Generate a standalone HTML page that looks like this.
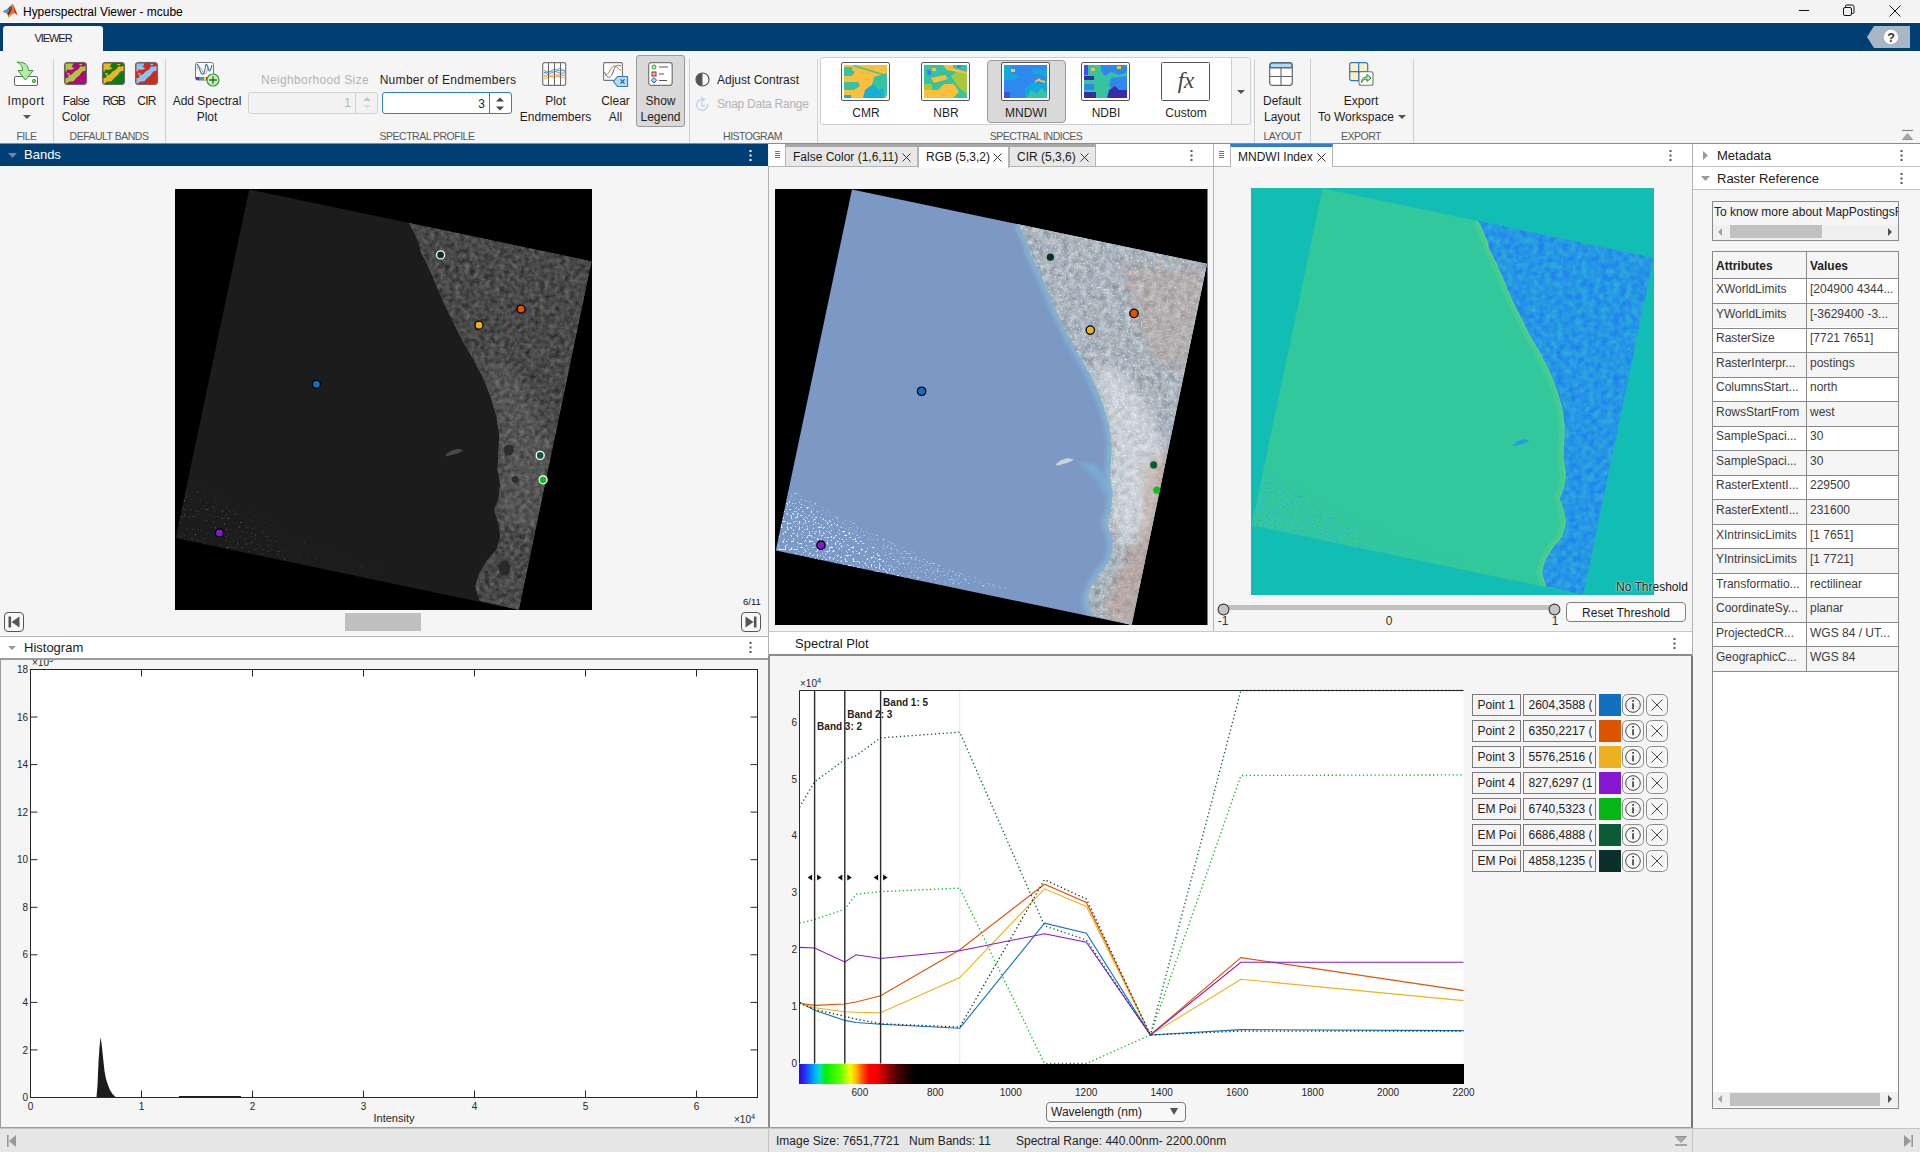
<!DOCTYPE html><html><head><meta charset="utf-8"><title>Hyperspectral Viewer - mcube</title><style>

*{box-sizing:border-box;margin:0;padding:0}
html,body{width:1920px;height:1152px;overflow:hidden;background:#f5f5f5}
body{font-family:"Liberation Sans",sans-serif;font-size:12px;color:#1a1a1a}
#app{position:relative;width:1920px;height:1152px;overflow:hidden;background:#f5f5f5}
.a{position:absolute}
.t{position:absolute;white-space:nowrap;line-height:1}
.c{text-align:center}
.ui{font-size:12px;color:#1f1f1f;letter-spacing:0}
.sec{font-size:10.5px;color:#5a5a5a;letter-spacing:-0.5px}
.dis{color:#b4b4b4}
.sep{position:absolute;width:1px;background:#d0d0d0;top:59px;height:84px}
.ph{font-size:13px;color:#1a1a1a}
.pt{font-size:12px;color:#1a1a1a}
svg{position:absolute;overflow:visible}

</style></head><body><div id="app">

<div class="a" style="left:0;top:0;width:1920px;height:23px;background:#f3f3f3;border-bottom:1px solid #fdfdfd"></div>
<svg style="left:0;top:0" width="20" height="22" viewBox="0 0 20 22">
 <path d="M2.3 11.6 L7.6 8.8 L11 5.6 L9.4 9.8 L7.2 13.8 Z" fill="#4a94dc"/>
 <path d="M7.6 8.8 L11 5.6 L12 4.2 L11.2 7.5 L9.4 9.8 Z" fill="#4e5f6e"/>
 <path d="M7.2 13.8 L9.4 9.8 L11.2 7.5 L12.4 3.8 L12.3 9.5 L10 14 L8.2 16.2 Z" fill="#8e2418"/>
 <path d="M8.2 16.2 L10 14 L12.3 9.5 L12.4 3.8 C13.6 4.6 14.6 9.2 17.8 15.6 C16.2 14.2 15.2 13.2 13.8 13.2 C12.2 13.6 10.6 16 8.8 18.1 Z" fill="#e8742c"/>
 <path d="M12.4 3.8 C13.6 4.6 15 9.6 17.8 15.6 C16.2 13.6 15.3 12.6 14.3 12.6 C14.3 9 13.6 6 12.4 3.8Z" fill="#c8261c"/>
 <path d="M8.2 16.2 L8.8 18.1 L10.4 16.3 L9.4 15 Z" fill="#f6b830"/>
</svg>
<div class="t" style="left:23px;top:6px;font-size:12px;color:#000;letter-spacing:-0.03px" id="title">Hyperspectral Viewer - mcube</div>
<svg style="left:1795px;top:0" width="120" height="23" viewBox="0 0 120 23" fill="none" stroke="#111" stroke-width="1">
 <path d="M4 10.5h10"/>
 <rect x="48.5" y="7.5" width="8" height="8" rx="1.5"/><path d="M50.5 7.5v-1.2a1.3 1.3 0 0 1 1.3 -1.3h5.4a1.8 1.8 0 0 1 1.8 1.8v5.4a1.3 1.3 0 0 1 -1.3 1.3h-1.2"/>
 <path d="M94.5 5.5l11 11M105.5 5.5l-11 11"/>
</svg>
<div class="a" style="left:0;top:23px;width:1920px;height:28px;background:#003e73"></div>
<div class="a" style="left:3px;top:26px;width:100px;height:25px;background:#f5f5f5;border-radius:3px 3px 0 0"></div>
<div class="t c" style="left:3px;width:100px;top:33px;font-size:11px;color:#222;letter-spacing:-1.05px">VIEWER</div>
<svg style="left:1867px;top:26px" width="43" height="22" viewBox="0 0 43 22">
 <path d="M0 11 L7 0 H43 V22 H7 Z" fill="#a9b6c4"/>
 <circle cx="24" cy="11" r="7.2" fill="#fff"/>
 <text x="24" y="15.5" font-size="12.5" font-weight="bold" text-anchor="middle" fill="#333" font-family="Liberation Sans, sans-serif">?</text>
</svg>

<div class="a" style="left:0;top:51px;width:1920px;height:92px;background:#f5f5f5"></div>
<div class="a" style="left:0;top:143px;width:1920px;height:1px;background:#8c8c8c"></div>
<div class="sep" style="left:53px"></div>
<div class="sep" style="left:165px"></div>
<div class="sep" style="left:689px"></div>
<div class="sep" style="left:817px"></div>
<div class="sep" style="left:1254px"></div>
<div class="sep" style="left:1310px"></div>
<div class="sep" style="left:1413px"></div>
<svg style="left:13px;top:61px" width="26" height="26" viewBox="0 0 26 26">
 <rect x="1.5" y="15.5" width="23" height="9" rx="1.5" fill="#fff" stroke="#666"/>
 <circle cx="21" cy="20" r="1.6" fill="#8fd68f" stroke="#2f9e2f"/>
 <path d="M4 1.2 C11.5 0.8 15.5 4 15.5 9.5 H20 L12.5 19 L5 9.5 H9.5 C9.5 5.5 8 3 4 1.2Z" fill="#b8e8b0" stroke="#2f9e2f" stroke-linejoin="round"/>
</svg>
<div class="t c ui" style="left:-44.0px;width:140px;top:95px;letter-spacing:0.5px;">Import</div>
<svg style="left:23px;top:115px" width="8" height="4"><path d="M0 0h8l-4 4z" fill="#555"/></svg>
<div class="t c sec" style="left:-43.5px;width:140px;top:131px;">FILE</div>
<svg style="left:64px;top:62px" width="23" height="23" viewBox="0 0 24 24">
 <rect x="0.5" y="0.5" width="23" height="23" rx="3" fill="#b4067c" stroke="#777"/>
 <path d="M1.5 1.5 H10 L8 5 L11 6.5 L8 8 H3 V10 L1.5 10Z M22.5 4 L22.5 9 L19 10 L16 14 L13 16.5 L10 20 L5 20.5 L3 22.5 H1.5 V17 L5 16 L4 14 L8 13 L11 10 L15 7.5 L17 4.5 L20 5Z" fill="#a9c93e"/>
 <rect x="3" y="11.5" width="3" height="1.5" fill="#a9c93e"/><rect x="16" y="2" width="3" height="1.3" fill="#a9c93e"/>
 <rect x="0.5" y="0.5" width="23" height="23" rx="3" fill="none" stroke="#6a6a6a"/>
</svg>
<svg style="left:102px;top:62px" width="23" height="23" viewBox="0 0 24 24">
 <rect x="0.5" y="0.5" width="23" height="23" rx="3" fill="#0f7a12" stroke="#777"/>
 <path d="M1.5 1.5 H10 L8 5 L11 6.5 L8 8 H3 V10 L1.5 10Z M22.5 4 L22.5 9 L19 10 L16 14 L13 16.5 L10 20 L5 20.5 L3 22.5 H1.5 V17 L5 16 L4 14 L8 13 L11 10 L15 7.5 L17 4.5 L20 5Z" fill="#f0b21e"/>
 <rect x="3" y="11.5" width="3" height="1.5" fill="#f0b21e"/><rect x="16" y="2" width="3" height="1.3" fill="#f0b21e"/>
 <rect x="0.5" y="0.5" width="23" height="23" rx="3" fill="none" stroke="#6a6a6a"/>
</svg>
<svg style="left:135px;top:62px" width="23" height="23" viewBox="0 0 24 24">
 <rect x="0.5" y="0.5" width="23" height="23" rx="3" fill="#d3281c" stroke="#777"/>
 <path d="M1.5 1.5 H10 L8 5 L11 6.5 L8 8 H3 V10 L1.5 10Z M22.5 4 L22.5 9 L19 10 L16 14 L13 16.5 L10 20 L5 20.5 L3 22.5 H1.5 V17 L5 16 L4 14 L8 13 L11 10 L15 7.5 L17 4.5 L20 5Z" fill="#82c8f2"/>
 <rect x="3" y="11.5" width="3" height="1.5" fill="#82c8f2"/><rect x="16" y="2" width="3" height="1.3" fill="#82c8f2"/>
 <rect x="0.5" y="0.5" width="23" height="23" rx="3" fill="none" stroke="#6a6a6a"/>
</svg>
<div class="t c ui" style="left:6.0px;width:140px;top:95px;letter-spacing:-0.6px;">False</div>
<div class="t c ui" style="left:6.0px;width:140px;top:111px;">Color</div>
<div class="t c ui" style="left:43.5px;width:140px;top:95px;letter-spacing:-1.3px;">RGB</div>
<div class="t c ui" style="left:76.5px;width:140px;top:95px;letter-spacing:-0.7px;">CIR</div>
<div class="t c sec" style="left:39.0px;width:140px;top:131px;">DEFAULT BANDS</div>
<svg style="left:195px;top:62px" width="25" height="25" viewBox="0 0 25 25">
 <rect x="0.5" y="0.5" width="18" height="17.5" rx="2" fill="#fff" stroke="#777"/>
 <path d="M1.5 7 C4 2 6 6 8 10 S12 12 13 4" fill="none" stroke="#e07020" stroke-width="0.8"/>
 <path d="M1.5 3 C4 0 5 14 8 12 S10 -1 12 3 S14 14 17 3" fill="none" stroke="#2a78c8" stroke-width="1.1"/>
 <rect x="1" y="15" width="3" height="3" fill="#6a2ad0"/><rect x="4" y="15" width="3" height="3" fill="#2a9df0"/><rect x="6.5" y="15" width="2.5" height="3" fill="#30c030"/><rect x="9" y="15" width="2.5" height="3" fill="#f0e020"/><rect x="11" y="15" width="3" height="3" fill="#e02020"/>
 <circle cx="18" cy="18" r="6" fill="#c8f0c0" stroke="#2f9e2f" stroke-width="1.2"/>
 <path d="M18 14.2v7.6M14.2 18h7.6" stroke="#1f6e1f" stroke-width="1.3"/>
</svg>
<div class="t c ui" style="left:137.0px;width:140px;top:95px;">Add Spectral</div>
<div class="t c ui" style="left:137.0px;width:140px;top:111px;">Plot</div>
<div class="t c ui dis" style="left:245.0px;width:140px;top:74px;letter-spacing:0.35px;">Neighborhood Size</div>
<div class="a" style="left:248px;top:92px;width:130px;height:22px;border:1px solid #d2d2d2;border-radius:3px;background:#f2f2f2"></div>
<div class="a" style="left:355px;top:93px;width:1px;height:20px;background:#d2d2d2"></div>
<div class="t ui dis" style="left:343px;top:97px;width:8px;text-align:right">1</div>
<svg style="left:363px;top:97px" width="8" height="12"><path d="M0 4l4-4l4 4z" fill="#c8c8c8"/><path d="M0 8h8l-4 3z" fill="#dcdcdc"/></svg>
<div class="t c ui" style="left:378.0px;width:140px;top:74px;letter-spacing:0.3px;">Number of Endmembers</div>
<div class="a" style="left:381.5px;top:92px;width:130.5px;height:22px;border:1.5px solid #2d7fd3;border-radius:3px;background:#fff"></div>
<div class="a" style="left:488.5px;top:93px;width:1px;height:20px;background:#2d7fd3"></div>
<div class="t ui" style="left:476px;top:98px;width:9px;text-align:right">3</div>
<svg style="left:496px;top:97px" width="8" height="14"><path d="M0 4.5l4-4l4 4z" fill="#444"/><path d="M0 9.5h8l-4 4z" fill="#444"/></svg>
<div class="t c sec" style="left:357.0px;width:140px;top:131px;">SPECTRAL PROFILE</div>
<svg style="left:542px;top:62px" width="25" height="24" viewBox="0 0 25 24">
 <rect x="0.7" y="0.7" width="23" height="22.6" rx="2" fill="#fff" stroke="#777" stroke-width="1.2"/>
 <path d="M2 8 L6 11 L12 7 L18 9 L23 8 M2 10 L6 13 L12 9 L18 11 L23 11 M2 11 L7 9 L12 11 L18 6 L23 10" fill="none" stroke="#4a90d8" stroke-width="0.9"/>
 <path d="M2 15 L6 13 L12 16 L18 12 L23 14 M2 17 L7 15 L12 14 L18 15 L23 16 M2 13 L6 16 L12 12 L18 14 L23 13" fill="none" stroke="#f0a030" stroke-width="0.9"/>
 <path d="M6.5 1v22M12.5 1v22M18.5 1v22" stroke="#666" stroke-width="1"/>
</svg>
<div class="t c ui" style="left:485.5px;width:140px;top:95px;">Plot</div>
<div class="t c ui" style="left:485.5px;width:140px;top:111px;">Endmembers</div>
<svg style="left:603px;top:62px" width="26" height="26" viewBox="0 0 26 26">
 <rect x="0.6" y="0.6" width="18.8" height="17.8" rx="1" fill="#fff" stroke="#777" stroke-width="1.1"/>
 <path d="M1.5 13 C6 14 7 5 11 4 S15 9 18 8" fill="none" stroke="#e07020" stroke-width="1"/>
 <path d="M1.5 10 C5 18 8 16 10 10 S14 2 18 4" fill="none" stroke="#2a78c8" stroke-width="1"/>
 <path d="M10.5 19.5 L14.5 14.5 H24.5 V24.5 H14.5 Z" fill="#b8dcf4" stroke="#2a78c8" stroke-width="1.1" stroke-linejoin="round"/>
 <path d="M17.5 17.3l4 4.4M21.5 17.3l-4 4.4" stroke="#1a5aa8" stroke-width="1.1"/>
</svg>
<div class="t c ui" style="left:545.5px;width:140px;top:95px;">Clear</div>
<div class="t c ui" style="left:545.5px;width:140px;top:111px;">All</div>
<div class="a" style="left:636px;top:55px;width:49px;height:72px;background:#d9d9d9;border:1px solid #9a9a9a;border-radius:3px"></div>
<svg style="left:648px;top:62px" width="25" height="24" viewBox="0 0 25 24">
 <rect x="0.7" y="0.7" width="23.5" height="22.6" rx="2.5" fill="#fff" stroke="#777" stroke-width="1.2"/>
 <circle cx="6" cy="5" r="2" fill="#c0f0c0" stroke="#2f9e2f" stroke-width="1"/>
 <rect x="4" y="10" width="4" height="4" fill="#f4b890" stroke="#a03018" stroke-width="1"/>
 <path d="M6 15.6 l2.7 2.7 l-2.7 2.7 l-2.7 -2.7z" fill="#a0d0f8" stroke="#1a60b0" stroke-width="1"/>
 <path d="M11 5h9M11 12h5M11 18.5h8" stroke="#555" stroke-width="1"/>
</svg>
<div class="t c ui" style="left:590.5px;width:140px;top:95px;">Show</div>
<div class="t c ui" style="left:590.5px;width:140px;top:111px;">Legend</div>
<svg style="left:695px;top:72px" width="15" height="15" viewBox="0 0 15 15"><circle cx="7.5" cy="7.5" r="6.5" fill="#fff" stroke="#555" stroke-width="1.2"/><path d="M7.5 1 A6.5 6.5 0 0 0 7.5 14Z" fill="#555"/></svg>
<div class="t ui" style="left:717px;top:74px">Adjust Contrast</div>
<svg style="left:695px;top:96px" width="14" height="16" viewBox="0 0 14 16" fill="none" stroke="#b8d4ee" stroke-width="1.3"><path d="M8 3.5 A5.5 5.5 0 1 0 12.5 8"/><path d="M6 1 L9.5 3.5 L6 6"/><path d="M7 6.5v3.5h3"/></svg>
<div class="t ui dis" style="left:717px;top:98px;letter-spacing:-0.25px">Snap Data Range</div>
<div class="t c sec" style="left:682.5px;width:140px;top:131px;">HISTOGRAM</div>
<div class="a" style="left:820px;top:57px;width:431px;height:68px;background:#fff;border:1px solid #cfcfcf;border-radius:3px"></div>
<div class="a" style="left:1231px;top:58px;width:1px;height:66px;background:#cfcfcf"></div>
<div class="a" style="left:1232px;top:58px;width:18px;height:66px;background:#f5f5f5;border-radius:0 3px 3px 0"></div>
<svg style="left:1237px;top:90px" width="8" height="4"><path d="M0 0h8l-4 4z" fill="#555"/></svg>
<div class="a" style="left:986.5px;top:59.5px;width:79.5px;height:63.5px;background:#d9d9d9;border:1px solid #9a9a9a;border-radius:4px"></div>
<svg style="left:841px;top:62px" width="49" height="39" viewBox="0 0 49 39"><rect x="0.5" y="0.5" width="48" height="38" rx="1.5" fill="#fff" stroke="#555"/><rect x="3" y="3" width="43" height="33" fill="#fdbe3c"/><path d="M3 5 h8 v3 l3 2 l-3 4 h-8z M3 20 h14 l2 4 l-6 4 h-10z M33 15 l13 -4 v22 l-6 2 l-10 -8 l2 -8z M14 3.2 L46 13 v1.6 L12 4.2z" fill="#35c3a0"/><path d="M22 36 l2 -8 l8 -6 l6 6 l4 -2 l2 10z M3 33 h7 v3 h-7z" fill="#14b1d4"/></svg>
<div class="t c ui" style="left:796.0px;width:140px;top:107px;">CMR</div>
<svg style="left:921px;top:62px" width="49" height="39" viewBox="0 0 49 39"><rect x="0.5" y="0.5" width="48" height="38" rx="1.5" fill="#fff" stroke="#555"/><rect x="3" y="3" width="43" height="33" fill="#35c3a0"/><path d="M3 28 h14 l6 -6 h10 l5 8 l-6 6 h-29z M10 16 l14 -3 l3 4 l-14 4z M3 36 v-4 h8 v4z" fill="#fdbe3c"/><path d="M3 22 h8 v6 h-8z M30 14 l8 -6 l8 4 v20 l-8 -6 l-4 -6z" fill="#a8c83c"/><path d="M22 3 h10 v3 l14 4 v2 l-20 -4z M11 6 h4 v3 h-4z" fill="#fdbe3c"/><path d="M6 8 h4 v5 h-4z M36 3 h4 v3 h-4z" fill="#2f88f0"/></svg>
<div class="t c ui" style="left:876.0px;width:140px;top:107px;">NBR</div>
<svg style="left:1001px;top:62px" width="49" height="39" viewBox="0 0 49 39"><rect x="0.5" y="0.5" width="48" height="38" rx="1.5" fill="#fff" stroke="#555"/><rect x="3" y="3" width="43" height="33" fill="#2f88f0"/><path d="M3 3 h8 v8 l8 4 l-10 4 l-6 -2z M24 26 l8 -6 l8 2 l6 -6 v20 h-22z M30 6 l16 2 v6 l-14 -2z" fill="#14a8dc"/><path d="M26 36 l4 -8 l6 4 l4 -6 l6 6 v4z" fill="#35c3a0"/><path d="M10 7 h4 v3 h-4z M34 19 l4 -3 l2 2 l4 1 v2 l-4 -1 l-3 -1 l-3 2z" fill="#fdbe3c"/><path d="M3 30 h6 v6 h-6z" fill="#4050e0"/></svg>
<div class="t c ui" style="left:956.0px;width:140px;top:107px;">MNDWI</div>
<svg style="left:1081px;top:62px" width="49" height="39" viewBox="0 0 49 39"><rect x="0.5" y="0.5" width="48" height="38" rx="1.5" fill="#fff" stroke="#555"/><rect x="3" y="3" width="43" height="33" fill="#35c3a0"/><path d="M20 3 h26 v8 l-8 2 l-8 -3 l-6 4 l-4 -5z M30 16 l16 -2 v14 l-10 2 l-8 -6z M3 22 h10 v6 h-10z" fill="#2f88f0"/><path d="M26 36 l2 -8 l6 -4 l4 4 l8 0 v8z M3 14 h10 v4 h-10z M3 30 h12 v6 h-12z" fill="#3a2ca8"/><path d="M10 6 h4 v3 h-4z M36 4 h4 v3 h-4z" fill="#fdbe3c"/><path d="M3 3 h4 v10 h-4z" fill="#4050e0"/></svg>
<div class="t c ui" style="left:1036.0px;width:140px;top:107px;">NDBI</div>
<svg style="left:1161px;top:62px" width="49" height="39" viewBox="0 0 49 39">
 <rect x="0.5" y="0.5" width="48" height="38" rx="1" fill="#fff" stroke="#555"/>
 <text x="25" y="26" font-family="Liberation Serif, serif" font-style="italic" font-size="23" text-anchor="middle" fill="#444">fx</text></svg>
<div class="t c ui" style="left:1116.0px;width:140px;top:107px;">Custom</div>
<div class="t c sec" style="left:966.0px;width:140px;top:131px;">SPECTRAL INDICES</div>
<svg style="left:1269px;top:62px" width="25" height="25" viewBox="0 0 25 25">
 <rect x="0.7" y="0.7" width="22.6" height="22.6" rx="2.5" fill="#fff" stroke="#666" stroke-width="1.2"/>
 <path d="M1.3 5.5 V3 a1.8 1.8 0 0 1 1.8 -1.8 H21 a1.8 1.8 0 0 1 1.8 1.8 V5.5Z" fill="#b0d8f8" stroke="#2a78c8" stroke-width="1"/>
 <path d="M1 6h22M1 14.5h22M12 6v17" stroke="#666" stroke-width="1.1"/>
</svg>
<div class="t c ui" style="left:1212.0px;width:140px;top:95px;">Default</div>
<div class="t c ui" style="left:1212.0px;width:140px;top:111px;">Layout</div>
<div class="t c sec" style="left:1212.5px;width:140px;top:131px;">LAYOUT</div>
<svg style="left:1349px;top:62px" width="26" height="25" viewBox="0 0 26 25">
 <rect x="0.7" y="0.7" width="18" height="18" rx="2" fill="#fbf0c0" stroke="#2a78c8" stroke-width="1.2"/>
 <path d="M9.7 1v18M1 9.7h18" stroke="#2a78c8" stroke-width="1.2"/>
 <rect x="10" y="9.7" width="14" height="13.6" rx="2" fill="#fff" stroke="#777" stroke-width="1.1"/>
 <path d="M12.5 20.5 C12.5 16.5 15 15 18 15 V12.5 L22 16 L18 19.5 V17 C15.5 17 14 18 12.5 20.5Z" fill="#c0f0b8" stroke="#1f8e1f" stroke-width="1" stroke-linejoin="round"/>
</svg>
<div class="t c ui" style="left:1291.0px;width:140px;top:95px;">Export</div>
<div class="t ui" style="left:1318px;top:111px">To Workspace</div>
<svg style="left:1398px;top:115px" width="8" height="4"><path d="M0 0h8l-4 4z" fill="#555"/></svg>
<div class="t c sec" style="left:1291.0px;width:140px;top:131px;">EXPORT</div>
<svg style="left:1902px;top:130px" width="11" height="10"><path d="M0 0.5h11" stroke="#888" stroke-width="1.2"/><path d="M0.5 9.5L5.5 3.5L10.5 9.5Z" fill="#aaa" stroke="#888" stroke-width="0.8"/></svg>
<div class="a" style="left:0;top:144px;width:768px;height:22px;background:#003e73"></div>
<svg style="left:8px;top:153px" width="9" height="5"><path d="M0 0h9l-4.5 5z" fill="#6f88a6"/></svg>
<div class="t" style="left:24px;top:148px;font-size:13px;color:#fff">Bands</div>
<svg style="left:749px;top:150px" width="3" height="11"><rect x="0.5" y="0" width="2" height="2" fill="#fff"/><rect x="0.5" y="4.5" width="2" height="2" fill="#fff"/><rect x="0.5" y="9" width="2" height="2" fill="#fff"/></svg>
<div class="a" style="left:768px;top:166px;width:1px;height:963px;background:#b0b0b0"></div>
<svg style="left:175px;top:189px" width="417" height="421" viewBox="0 0 417 421">
<defs><clipPath id="qb"><polygon points="74.2,0.4 416.6,72.2 343.9,421.0 0.7,349.1"/></clipPath>
<clipPath id="lb"><polygon points="233.9,33.7 239.5,44.2 244.3,55.4 245.8,62.9 252.5,76.0 260.7,94.7 269.3,115.3 278.6,134.0 287.9,152.7 299.1,171.4 308.5,190.1 315.9,208.8 321.5,227.5 324.1,246.2 323.4,264.9 322.6,279.9 325.2,294.9 323.4,309.9 318.9,321.1 323.4,334.2 325.2,347.3 321.5,360.4 312.2,371.6 304.0,384.7 300.3,397.8 304.7,411.6 343.9,421.0 416.6,72.2"/></clipPath>
<filter id="fb" x="0" y="0" width="100%" height="100%" color-interpolation-filters="sRGB"><feTurbulence type="fractalNoise" baseFrequency="0.2" numOctaves="3" seed="4"/><feColorMatrix type="matrix" values="0.3 0.15 0 0 0.06  0.3 0.15 0 0 0.06  0.3 0.15 0 0 0.06  0 0 0 0 1"/><feComposite in2="SourceAlpha" operator="in"/></filter>
<filter id="gb" x="0" y="0" width="100%" height="100%" color-interpolation-filters="sRGB"><feTurbulence type="fractalNoise" baseFrequency="0.55" numOctaves="1" seed="9"/><feColorMatrix type="matrix" values="0 0 0 0 0.42  0 0 0 0 0.42  0 0 0 0 0.42  0 5 0 0 -3.3"/><feComposite in2="SourceAlpha" operator="in"/></filter>
<filter id="blb" x="-20%" y="-20%" width="140%" height="140%"><feGaussianBlur stdDeviation="5"/></filter>
<filter id="bl2b" x="-20%" y="-20%" width="140%" height="140%"><feGaussianBlur stdDeviation="2"/></filter>
</defs>
<rect width="417" height="421" fill="#000"/>
<g clip-path="url(#qb)">
<rect width="417" height="421" fill="#1c1c1c"/>
<polygon points="0.0,294.7 16.7,290.5 54.2,311.5 104.2,336.8 166.8,366.3 229.4,387.3 125.1,378.9 0.0,349.4" filter="url(#gb)" fill="#fff" opacity="0.55"/>
<polygon points="0.0,303.1 20.9,301.0 58.4,322.1 100.1,349.4 125.1,381.0 0.0,349.4" filter="url(#gb)" fill="#fff"/>
<g clip-path="url(#lb)"><rect width="417" height="421" fill="#4a4a4a"/>
<rect width="417" height="421" filter="url(#fb)"/>
<rect width="417" height="421" filter="url(#gb)" opacity="0.5"/>
<polygon points="308.6,168.4 333.6,176.8 358.6,210.5 375.3,252.6 371.1,303.1 358.6,336.8 333.6,345.2 323.2,303.1 325.3,252.6 316.9,210.5" fill="#fff" opacity="0.07" filter="url(#blb)"/>
<ellipse cx="333.6" cy="261.0" rx="5.0" ry="5.5" fill="#262626" opacity="0.85"/>
<ellipse cx="329.4" cy="378.9" rx="5.8" ry="7.6" fill="#262626" opacity="0.85"/>
<ellipse cx="339.9" cy="290.5" rx="3.3" ry="3.4" fill="#262626" opacity="0.85"/>
</g>
<polygon points="270.4,265.7 275.6,262.0 282.4,259.7 288.3,261.2 283.1,264.2 277.1,265.7 271.9,267.2" fill="#4a4a4a"/>
</g>
<circle cx="265.6" cy="65.9" r="4" fill="#0b2f2c" stroke="#fff" stroke-width="1.3"/>
<circle cx="346.1" cy="120.1" r="4" fill="#dd5400" stroke="#000" stroke-width="1.3"/>
<circle cx="304.0" cy="136.2" r="4" fill="#edb120" stroke="#000" stroke-width="1.3"/>
<circle cx="141.4" cy="195.3" r="4" fill="#1171be" stroke="#000" stroke-width="1.3"/>
<circle cx="365.2" cy="266.4" r="4" fill="#0b5c36" stroke="#fff" stroke-width="1.3"/>
<circle cx="368.1" cy="290.8" r="4" fill="#0fbf18" stroke="#fff" stroke-width="1.3"/>
<circle cx="44.4" cy="343.9" r="4" fill="#8516d1" stroke="#000" stroke-width="1.3"/>
</svg>
<div class="a" style="left:345px;top:613px;width:76px;height:18px;background:#c0c0c0"></div>
<div class="t" style="left:743px;top:597px;font-size:9.5px;color:#111">6/11</div>
<svg style="left:4px;top:612px" width="20" height="20" viewBox="0 0 20 20"><rect x="0.5" y="0.5" width="19" height="19" rx="3.5" fill="#f8f8f8" stroke="#555"/><g><rect x="4.5" y="4.5" width="2.6" height="11" fill="#555"/><path d="M15.5 4.5 V15.5 L7.5 10Z" fill="#555"/></g></svg>
<svg style="left:741px;top:612px" width="20" height="20" viewBox="0 0 20 20"><rect x="0.5" y="0.5" width="19" height="19" rx="3.5" fill="#f8f8f8" stroke="#555"/><g transform="translate(20,0) scale(-1,1)"><rect x="4.5" y="4.5" width="2.6" height="11" fill="#555"/><path d="M15.5 4.5 V15.5 L7.5 10Z" fill="#555"/></g></svg>
<div class="a" style="left:0;top:636px;width:768px;height:1px;background:#b8b8b8"></div>
<div class="a" style="left:769px;top:144px;width:444px;height:22px;background:#fff"></div>
<div class="a" style="left:769px;top:166px;width:444px;height:1px;background:#b4b4b4"></div>
<div class="a" style="left:785px;top:144px;width:311px;height:3px;background:#a8a8a8"></div>
<div class="a" style="left:785px;top:147px;width:133px;height:19px;background:#e8e8e8;border-left:1px solid #b4b4b4;border-right:1px solid #b4b4b4"></div>
<div class="t pt" style="left:793px;top:151px">False Color (1,6,11)</div>
<svg style="left:902px;top:153px" width="9" height="9"><path d="M0.5 0.5l8 8M8.5 0.5l-8 8" stroke="#333" stroke-width="1" fill="none"/></svg>
<div class="a" style="left:918px;top:147px;width:91px;height:21px;background:#fff;border-left:1px solid #b4b4b4;border-right:1px solid #b4b4b4"></div>
<div class="t pt" style="left:926px;top:151px">RGB (5,3,2)</div>
<svg style="left:993px;top:153px" width="9" height="9"><path d="M0.5 0.5l8 8M8.5 0.5l-8 8" stroke="#333" stroke-width="1" fill="none"/></svg>
<div class="a" style="left:1009px;top:147px;width:87px;height:19px;background:#e8e8e8;border-left:1px solid #b4b4b4;border-right:1px solid #b4b4b4"></div>
<div class="t pt" style="left:1017px;top:151px">CIR (5,3,6)</div>
<svg style="left:1080px;top:153px" width="9" height="9"><path d="M0.5 0.5l8 8M8.5 0.5l-8 8" stroke="#333" stroke-width="1" fill="none"/></svg>
<svg style="left:775px;top:151px" width="5" height="8"><path d="M0 0.5h5M0 2.5h5M0 4.5h5M0 6.5h5" stroke="#777" stroke-width="1"/></svg>
<svg style="left:1190px;top:150px" width="3" height="11"><rect x="0.5" y="0" width="2" height="2" fill="#555"/><rect x="0.5" y="4.5" width="2" height="2" fill="#555"/><rect x="0.5" y="9" width="2" height="2" fill="#555"/></svg>
<div class="a" style="left:1213px;top:144px;width:1px;height:488px;background:#b4b4b4"></div>
<svg style="left:775px;top:189px" width="432.5" height="436" viewBox="0 0 432.5 436">
<defs><clipPath id="qr"><polygon points="77.0,0.4 432.1,74.8 356.7,436.0 0.8,361.6"/></clipPath>
<clipPath id="lr"><polygon points="242.6,34.9 248.4,45.7 253.4,57.4 254.9,65.1 261.9,78.7 270.4,98.1 279.3,119.4 289.0,138.7 298.6,158.1 310.3,177.5 319.9,196.9 327.7,216.3 333.5,235.6 336.2,255.0 335.4,274.4 334.6,289.9 337.3,305.4 335.4,320.9 330.8,332.5 335.4,346.1 337.3,359.7 333.5,373.2 323.8,384.8 315.3,398.4 311.4,412.0 316.1,426.3 356.7,436.0 432.1,74.8"/></clipPath>
<filter id="fr" x="0" y="0" width="100%" height="100%" color-interpolation-filters="sRGB"><feTurbulence type="fractalNoise" baseFrequency="0.16" numOctaves="3" seed="4"/><feColorMatrix type="matrix" values="0.3 0.15 0.12 0 0.375  0.3 0.15 0 0 0.47  0.3 0.15 -0.1 0 0.555  0 0 0 0 1"/><feComposite in2="SourceAlpha" operator="in"/></filter>
<filter id="gr" x="0" y="0" width="100%" height="100%" color-interpolation-filters="sRGB"><feTurbulence type="fractalNoise" baseFrequency="0.5" numOctaves="1" seed="9"/><feColorMatrix type="matrix" values="0 0 0 0 1  0 0 0 0 1  0 0 0 0 1  0 5 0 0 -2.9"/><feComposite in2="SourceAlpha" operator="in"/></filter>
<filter id="blr" x="-20%" y="-20%" width="140%" height="140%"><feGaussianBlur stdDeviation="5"/></filter>
<filter id="bl2r" x="-20%" y="-20%" width="140%" height="140%"><feGaussianBlur stdDeviation="2"/></filter>
</defs>
<rect width="432.5" height="436" fill="#000"/>
<g clip-path="url(#qr)">
<rect width="432.5" height="436" fill="#7c98c4"/>
<polygon points="0.0,305.2 17.3,300.8 56.2,322.6 108.1,348.8 173.0,379.3 237.9,401.1 129.8,392.4 0.0,361.9" filter="url(#gr)" fill="#fff" opacity="0.55"/>
<polygon points="0.0,313.9 21.6,311.7 60.6,333.5 103.8,361.9 129.8,394.6 0.0,361.9" filter="url(#gr)" fill="#fff"/>
<polyline points="242.6,34.9 248.4,45.7 253.4,57.4 254.9,65.1 261.9,78.7 270.4,98.1 279.3,119.4 289.0,138.7 298.6,158.1 310.3,177.5 319.9,196.9 327.7,216.3 333.5,235.6 336.2,255.0 335.4,274.4 334.6,289.9 337.3,305.4 335.4,320.9 330.8,332.5 335.4,346.1 337.3,359.7 333.5,373.2 323.8,384.8 315.3,398.4 311.4,412.0 316.1,426.3" fill="none" stroke="#8fc0dc" stroke-width="9" opacity="0.6" filter="url(#bl2r)"/>
<g clip-path="url(#lr)"><rect width="432.5" height="436" fill="#aab5bc"/>
<rect width="432.5" height="436" filter="url(#fr)"/>
<rect width="432.5" height="436" filter="url(#gr)" opacity="0.55"/>
<polygon points="320.1,174.4 346.0,183.1 371.9,218.0 389.2,261.6 384.9,313.9 371.9,348.8 346.0,357.5 335.2,313.9 337.4,261.6 328.7,218.0" fill="#fff" opacity="0.38" filter="url(#blr)"/>
<polygon points="371.9,270.3 402.2,261.6 389.2,348.8 363.3,436.0 328.7,427.3 346.0,375.0 367.6,340.1" fill="#c09a88" opacity="0.45" filter="url(#blr)"/>
<polygon points="346.0,74.1 432.5,82.8 415.2,183.1 380.6,174.4 363.3,130.8" fill="#c4a292" opacity="0.3" filter="url(#blr)"/>
</g>
<polyline points="242.6,34.9 248.4,45.7 253.4,57.4 254.9,65.1 261.9,78.7 270.4,98.1 279.3,119.4 289.0,138.7 298.6,158.1 310.3,177.5 319.9,196.9 327.7,216.3 333.5,235.6 336.2,255.0 335.4,274.4 334.6,289.9 337.3,305.4 335.4,320.9 330.8,332.5 335.4,346.1 337.3,359.7 333.5,373.2 323.8,384.8 315.3,398.4 311.4,412.0 316.1,426.3" fill="none" stroke="#6fb7cf" stroke-width="1.2" opacity="0.7"/>
<polygon points="280.5,275.2 285.9,271.3 292.8,269.0 299.0,270.5 293.6,273.6 287.4,275.2 282.0,276.7" fill="#c9d3d6"/>
<polygon points="302.8,272.5 320.1,275.6 330.9,287.8 335.2,305.2 328.7,305.2 322.2,289.9 311.4,281.2" fill="#78b4d8" opacity="0.75" filter="url(#bl2r)"/>
</g>
<circle cx="275.4" cy="68.2" r="3.6" fill="#0b2f2c"/>
<circle cx="359.0" cy="124.4" r="4.2" fill="#dd5400" stroke="#000" stroke-width="1.3"/>
<circle cx="315.3" cy="141.1" r="4.2" fill="#edb120" stroke="#000" stroke-width="1.3"/>
<circle cx="146.6" cy="202.3" r="4.2" fill="#1171be" stroke="#000" stroke-width="1.3"/>
<circle cx="378.7" cy="275.9" r="3.6" fill="#0b5c36"/>
<circle cx="381.8" cy="301.1" r="3.6" fill="#0fbf18"/>
<circle cx="46.0" cy="356.2" r="4.2" fill="#8516d1" stroke="#000" stroke-width="1.3"/>
</svg>
<div class="a" style="left:769px;top:631px;width:924px;height:1px;background:#c8c8c8"></div>
<div class="a" style="left:1214px;top:144px;width:478px;height:22px;background:#fff"></div>
<div class="a" style="left:1214px;top:166px;width:478px;height:1px;background:#b4b4b4"></div>
<div class="a" style="left:1230px;top:144px;width:103px;height:23px;background:#fff;border-left:1px solid #b4b4b4;border-right:1px solid #b4b4b4;border-top:3px solid #2d7fd3"></div>
<div class="t pt" style="left:1238px;top:151px">MNDWI Index</div>
<svg style="left:1317px;top:153px" width="9" height="9"><path d="M0.5 0.5l8 8M8.5 0.5l-8 8" stroke="#333" stroke-width="1" fill="none"/></svg>
<svg style="left:1219px;top:151px" width="5" height="8"><path d="M0 0.5h5M0 2.5h5M0 4.5h5M0 6.5h5" stroke="#777" stroke-width="1"/></svg>
<svg style="left:1669px;top:150px" width="3" height="11"><rect x="0.5" y="0" width="2" height="2" fill="#555"/><rect x="0.5" y="4.5" width="2" height="2" fill="#555"/><rect x="0.5" y="9" width="2" height="2" fill="#555"/></svg>
<div class="a" style="left:1692px;top:144px;width:1px;height:985px;background:#b4b4b4"></div>
<svg style="left:1251px;top:188px" width="403" height="407" viewBox="0 0 403 407">
<defs><clipPath id="qm"><polygon points="71.7,0.4 402.6,69.8 332.3,407.0 0.7,337.5"/></clipPath>
<clipPath id="lm"><polygon points="226.0,32.6 231.4,42.7 236.1,53.5 237.5,60.8 244.0,73.4 252.0,91.5 260.3,111.4 269.3,129.5 278.3,147.6 289.1,165.7 298.1,183.8 305.3,201.9 310.7,220.0 313.2,238.0 312.5,256.1 311.8,270.6 314.3,285.1 312.5,299.6 308.2,310.4 312.5,323.1 314.3,335.7 310.7,348.4 301.7,359.2 293.8,371.9 290.2,384.6 294.5,398.0 332.3,407.0 402.6,69.8"/></clipPath>
<filter id="fm" x="0" y="0" width="100%" height="100%" color-interpolation-filters="sRGB"><feTurbulence type="fractalNoise" baseFrequency="0.16" numOctaves="3" seed="4"/><feColorMatrix type="matrix" values="0.08 0 0 0 0.11  0.3 0 0 0 0.44  -0.15 0 0 0 0.97  0 0 0 0 1"/><feComposite in2="SourceAlpha" operator="in"/></filter>
<filter id="gm" x="0" y="0" width="100%" height="100%" color-interpolation-filters="sRGB"><feTurbulence type="fractalNoise" baseFrequency="0.5" numOctaves="1" seed="9"/><feColorMatrix type="matrix" values="0 0 0 0 0.16  0 0 0 0 0.66  0 0 0 0 0.86  0 5 0 0 -3.0"/><feComposite in2="SourceAlpha" operator="in"/></filter>
<filter id="blm" x="-20%" y="-20%" width="140%" height="140%"><feGaussianBlur stdDeviation="5"/></filter>
<filter id="bl2m" x="-20%" y="-20%" width="140%" height="140%"><feGaussianBlur stdDeviation="2"/></filter>
</defs>
<rect width="403" height="407" fill="#12bdb4"/>
<g clip-path="url(#qm)">
<rect width="403" height="407" fill="#33c79c"/>
<polygon points="0.0,284.9 16.1,280.8 52.4,301.2 100.8,325.6 161.2,354.1 221.7,374.4 120.9,366.3 0.0,337.8" filter="url(#gm)" fill="#fff" opacity="0.55"/>
<polygon points="0.0,293.0 20.2,291.0 56.4,311.4 96.7,337.8 120.9,368.3 0.0,337.8" filter="url(#gm)" fill="#fff"/>
<polyline points="226.0,32.6 231.4,42.7 236.1,53.5 237.5,60.8 244.0,73.4 252.0,91.5 260.3,111.4 269.3,129.5 278.3,147.6 289.1,165.7 298.1,183.8 305.3,201.9 310.7,220.0 313.2,238.0 312.5,256.1 311.8,270.6 314.3,285.1 312.5,299.6 308.2,310.4 312.5,323.1 314.3,335.7 310.7,348.4 301.7,359.2 293.8,371.9 290.2,384.6 294.5,398.0" fill="none" stroke="#4ccf8a" stroke-width="10" opacity="0.55"/>
<g clip-path="url(#lm)"><rect width="403" height="407" fill="#2b8eec"/>
<rect width="403" height="407" filter="url(#fm)"/>
</g>
<polyline points="226.0,32.6 231.4,42.7 236.1,53.5 237.5,60.8 244.0,73.4 252.0,91.5 260.3,111.4 269.3,129.5 278.3,147.6 289.1,165.7 298.1,183.8 305.3,201.9 310.7,220.0 313.2,238.0 312.5,256.1 311.8,270.6 314.3,285.1 312.5,299.6 308.2,310.4 312.5,323.1 314.3,335.7 310.7,348.4 301.7,359.2 293.8,371.9 290.2,384.6 294.5,398.0" fill="none" stroke="#6fd07a" stroke-width="1.2" opacity="0.9"/>
<polygon points="261.3,256.9 266.4,253.2 272.9,251.1 278.6,252.5 273.6,255.4 267.8,256.9 262.8,258.3" fill="#2b9be4"/>
</g>
</svg>
<div class="t" style="left:1616px;top:581px;font-size:12px;color:#111;text-shadow:0 0 2px #fff,0 0 1px #fff">No Threshold</div>
<div class="a" style="left:1223px;top:605px;width:331px;height:5px;background:#c0c0c0"></div>
<svg style="left:1217.0px;top:603px" width="13" height="13"><circle cx="6.5" cy="6.5" r="5.4" fill="#c4c4c4" stroke="#3a3a3a" stroke-width="1.1"/></svg>
<svg style="left:1548.0px;top:603px" width="13" height="13"><circle cx="6.5" cy="6.5" r="5.4" fill="#c4c4c4" stroke="#3a3a3a" stroke-width="1.1"/></svg>
<div class="t c" style="left:1208px;width:30px;top:615px;font-size:12px;color:#333">-1</div>
<div class="t c" style="left:1374px;width:30px;top:615px;font-size:12px;color:#333">0</div>
<div class="t c" style="left:1540px;width:30px;top:615px;font-size:12px;color:#333">1</div>
<div class="a" style="left:1566px;top:602px;width:120px;height:20px;border:1px solid #808080;border-radius:4px;background:#fbfbfb"></div>
<div class="t c" style="left:1566px;width:120px;top:607px;font-size:12px;color:#1a1a1a">Reset Threshold</div>
<div class="a" style="left:0;top:637px;width:768px;height:21px;background:#fff"></div>
<svg style="left:8px;top:646px" width="8" height="4"><path d="M0 0h8l-4 4z" fill="#9a9a9a"/></svg>
<div class="t ph" style="left:24px;top:641px">Histogram</div>
<svg style="left:749px;top:642px" width="3" height="11"><rect x="0.5" y="0" width="2" height="2" fill="#555"/><rect x="0.5" y="4.5" width="2" height="2" fill="#555"/><rect x="0.5" y="9" width="2" height="2" fill="#555"/></svg>
<div class="a" style="left:0;top:658px;width:768px;height:2px;background:#9c9c9c"></div>
<div class="a" style="left:0;top:660px;width:1px;height:468px;background:#9c9c9c"></div>
<div class="a" style="left:0;top:1127px;width:768px;height:1px;background:#9c9c9c"></div>
<svg style="left:0;top:660px;overflow:hidden" width="768" height="468" viewBox="0 660 768 468" font-family="Liberation Sans, sans-serif" font-size="10" fill="#262626">
<rect x="30.5" y="669.5" width="727.0" height="428.0" fill="#fff" stroke="#262626" stroke-width="1"/>
<path d="M141.5 1097.5v-7M141.5 669.5v7 M252.5 1097.5v-7M252.5 669.5v7 M363.5 1097.5v-7M363.5 669.5v7 M474.5 1097.5v-7M474.5 669.5v7 M585.5 1097.5v-7M585.5 669.5v7 M696.5 1097.5v-7M696.5 669.5v7 M30.5 1049.9h7M757.5 1049.9h-7 M30.5 1002.4h7M757.5 1002.4h-7 M30.5 954.8h7M757.5 954.8h-7 M30.5 907.3h7M757.5 907.3h-7 M30.5 859.7h7M757.5 859.7h-7 M30.5 812.1h7M757.5 812.1h-7 M30.5 764.6h7M757.5 764.6h-7 M30.5 717.0h7M757.5 717.0h-7" stroke="#262626" stroke-width="1" fill="none"/>
<text x="30.5" y="1110" text-anchor="middle">0</text>
<text x="141.5" y="1110" text-anchor="middle">1</text>
<text x="252.5" y="1110" text-anchor="middle">2</text>
<text x="363.5" y="1110" text-anchor="middle">3</text>
<text x="474.5" y="1110" text-anchor="middle">4</text>
<text x="585.5" y="1110" text-anchor="middle">5</text>
<text x="696.5" y="1110" text-anchor="middle">6</text>
<text x="28" y="1101.1" text-anchor="end">0</text>
<text x="28" y="1053.5" text-anchor="end">2</text>
<text x="28" y="1006.0" text-anchor="end">4</text>
<text x="28" y="958.4" text-anchor="end">6</text>
<text x="28" y="910.9" text-anchor="end">8</text>
<text x="28" y="863.3" text-anchor="end">10</text>
<text x="28" y="815.7" text-anchor="end">12</text>
<text x="28" y="768.2" text-anchor="end">14</text>
<text x="28" y="720.6" text-anchor="end">16</text>
<text x="28" y="673.1" text-anchor="end">18</text>
<text x="394" y="1122" text-anchor="middle" font-size="11">Intensity</text>
<text x="734" y="1122.5">×10<tspan dy="-4" font-size="7.5">4</tspan></text>
<text x="32" y="665.5">×10<tspan dy="-4" font-size="7.5">5</tspan></text>
<path d="M96.5 1097 L97.5 1085 L98.5 1062 L99.5 1047 L100.5 1037.5 L101 1040 L101.6 1044 L102.5 1052 L103.5 1062 L104.5 1071 L106 1079 L108 1085 L110 1090 L112.5 1094 L115.5 1097 Z" fill="#1c1c1c"/>
<rect x="179" y="1096" width="62" height="1.5" fill="#1c1c1c"/>
</svg>
<div class="a" style="left:769px;top:632px;width:923px;height:22px;background:#fff"></div>
<div class="t ph" style="left:795px;top:637px">Spectral Plot</div>
<svg style="left:1673px;top:638px" width="3" height="11"><rect x="0.5" y="0" width="2" height="2" fill="#555"/><rect x="0.5" y="4.5" width="2" height="2" fill="#555"/><rect x="0.5" y="9" width="2" height="2" fill="#555"/></svg>
<div class="a" style="left:769px;top:654px;width:923px;height:2px;background:#8c8c8c"></div>
<div class="a" style="left:768px;top:656px;width:2px;height:472px;background:#8c8c8c"></div>
<div class="a" style="left:1691px;top:656px;width:2px;height:472px;background:#777"></div>
<div class="a" style="left:769px;top:1127px;width:923px;height:1px;background:#9c9c9c"></div>
<svg style="left:770px;top:656px" width="921" height="471" viewBox="770 656 921 471" font-family="Liberation Sans, sans-serif" font-size="10" fill="#262626">
<defs><linearGradient id="vis" x1="0" x2="1" y1="0" y2="0">
<stop offset="0.0000" stop-color="#3a00c8"/>
<stop offset="0.0085" stop-color="#2030ff"/>
<stop offset="0.0227" stop-color="#00a8ff"/>
<stop offset="0.0312" stop-color="#00e0c0"/>
<stop offset="0.0398" stop-color="#00f000"/>
<stop offset="0.0625" stop-color="#60ff00"/>
<stop offset="0.0767" stop-color="#f0ff00"/>
<stop offset="0.0852" stop-color="#ffc000"/>
<stop offset="0.0938" stop-color="#ff6000"/>
<stop offset="0.1051" stop-color="#ff0000"/>
<stop offset="0.1193" stop-color="#f00000"/>
<stop offset="0.1318" stop-color="#a00000"/>
<stop offset="0.1466" stop-color="#500000"/>
<stop offset="0.1636" stop-color="#180000"/>
<stop offset="0.1761" stop-color="#000"/>
<stop offset="1.0000" stop-color="#000"/>
</linearGradient></defs>
<rect x="799.5" y="690.5" width="664.0" height="373.0" fill="#fff"/>
<path d="M959.8 690.5V1063.5" stroke="#e4e4e4" stroke-width="1"/>
<path d="M799.5 1002.0 L814.6 1010.3 L844.8 1020.4 L856.1 1022.5 L880.6 1024.2 L959.8 1028.2 L1044.5 923.2 L1086.4 933.2 L1150.4 1035.0 L1240.9 1029.6 L1463.5 1030.6" fill="none" stroke="#1171be" stroke-width="1.1"/>
<path d="M799.5 1003.2 L814.6 1005.4 L844.8 1004.0 L856.1 1002.0 L880.6 995.8 L959.8 949.7 L1044.5 884.2 L1086.4 902.4 L1150.4 1035.0 L1240.9 957.6 L1463.5 990.6" fill="none" stroke="#dd5400" stroke-width="1.1"/>
<path d="M799.5 1003.2 L814.6 1007.7 L844.8 1011.7 L856.1 1012.3 L880.6 1012.8 L959.8 977.6 L1044.5 888.8 L1086.4 906.4 L1150.4 1035.0 L1240.9 979.3 L1463.5 1000.6" fill="none" stroke="#edb120" stroke-width="1.1"/>
<path d="M799.5 947.4 L814.6 948.0 L844.8 961.9 L856.1 954.8 L880.6 958.5 L959.8 950.8 L1044.5 933.7 L1086.4 942.3 L1150.4 1035.0 L1240.9 962.2 L1463.5 962.2" fill="none" stroke="#8516d1" stroke-width="1.1"/>
<path d="M799.5 923.2 L814.6 919.5 L844.8 909.3 L856.1 894.2 L880.6 891.6 L959.8 888.2 L1044.5 1063.5 L1086.4 1063.5 L1150.4 1035.0 L1240.9 775.5 L1463.5 774.9" fill="none" stroke="#05b714" stroke-width="1.3" stroke-dasharray="1.3 2.6"/>
<path d="M799.5 807.4 L814.6 781.8 L844.8 759.6 L856.1 755.6 L880.6 737.9 L959.8 732.2 L1044.5 925.8 L1086.4 940.0 L1150.4 1035.0 L1240.9 690.5 L1463.5 690.5" fill="none" stroke="#0b5c36" stroke-width="1.3" stroke-dasharray="1.3 2.6"/>
<path d="M799.5 1003.2 L814.6 1009.4 L844.8 1016.3 L856.1 1019.1 L880.6 1023.7 L959.8 1027.1 L1044.5 879.7 L1086.4 899.0 L1150.4 1035.0 L1240.9 1031.1 L1463.5 1031.1" fill="none" stroke="#0b2f2c" stroke-width="1.3" stroke-dasharray="1.3 2.6"/>
<path d="M814.6 690.5V1063.5" stroke="#2a2a2a" stroke-width="1.4"/>
<text x="817.1" y="730" font-weight="bold" font-size="10" fill="#222">Band 3: 2</text>
<path d="M807.6 877.5l4.5 -3v6zM821.6 877.5l-4.5 -3v6z" fill="#111"/>
<path d="M844.8 690.5V1063.5" stroke="#2a2a2a" stroke-width="1.4"/>
<text x="847.3" y="718" font-weight="bold" font-size="10" fill="#222">Band 2: 3</text>
<path d="M837.8 877.5l4.5 -3v6zM851.8 877.5l-4.5 -3v6z" fill="#111"/>
<path d="M880.6 690.5V1063.5" stroke="#2a2a2a" stroke-width="1.4"/>
<text x="883.1" y="706" font-weight="bold" font-size="10" fill="#222">Band 1: 5</text>
<path d="M873.6 877.5l4.5 -3v6zM887.6 877.5l-4.5 -3v6z" fill="#111"/>
<path d="M799.5 1063.5V690.5H1463.5" fill="none" stroke="#262626" stroke-width="1"/>
<rect x="799.0" y="1064" width="665.0" height="20" fill="url(#vis)"/>
<text x="797" y="1067.1" text-anchor="end">0</text>
<text x="797" y="1010.2" text-anchor="end">1</text>
<text x="797" y="953.3" text-anchor="end">2</text>
<text x="797" y="896.4" text-anchor="end">3</text>
<text x="797" y="839.4" text-anchor="end">4</text>
<text x="797" y="782.5" text-anchor="end">5</text>
<text x="797" y="725.6" text-anchor="end">6</text>
<text x="859.9" y="1096" text-anchor="middle">600</text>
<text x="935.3" y="1096" text-anchor="middle">800</text>
<text x="1010.8" y="1096" text-anchor="middle">1000</text>
<text x="1086.2" y="1096" text-anchor="middle">1200</text>
<text x="1161.7" y="1096" text-anchor="middle">1400</text>
<text x="1237.1" y="1096" text-anchor="middle">1600</text>
<text x="1312.6" y="1096" text-anchor="middle">1800</text>
<text x="1388.0" y="1096" text-anchor="middle">2000</text>
<text x="1463.5" y="1096" text-anchor="middle">2200</text>
<text x="800" y="687">×10<tspan dy="-4" font-size="7.5">4</tspan></text>
</svg>
<div class="a" style="left:1046px;top:1102px;width:140px;height:20px;background:#f8f8f8;border:1px solid #7a7a7a;border-radius:4px"></div>
<div class="t" style="left:1051px;top:1106px;font-size:12px;color:#222">Wavelength (nm)</div>
<svg style="left:1170px;top:1108px" width="8" height="7"><path d="M0 0h8l-4 7z" fill="#555"/></svg>
<div class="a" style="left:1472px;top:694.0px;width:49px;height:22px;border:1px solid #7a7a7a;background:#f5f5f5"><div class="a" style="left:0;top:0;width:43.5px;height:20px;overflow:hidden"><div class="t" style="left:4.5px;top:4px;font-size:12px;color:#222">Point 1</div></div></div>
<div class="a" style="left:1523px;top:694.0px;width:73px;height:22px;border:1px solid #7a7a7a;background:#f5f5f5"><div class="a" style="left:0;top:0;width:68px;height:20px;overflow:hidden"><div class="t" style="left:4.5px;top:4px;font-size:12px;color:#222">2604,3588 (1)</div></div></div>
<div class="a" style="left:1599px;top:694.0px;width:22px;height:22px;background:#1171be"></div>
<svg style="left:1622px;top:694.0px" width="46" height="22" viewBox="0 0 46 22"><rect x="0.5" y="0.5" width="21" height="21" rx="5" fill="#f7f7f7" stroke="#8a8a8a"/><circle cx="11" cy="11" r="7.3" fill="none" stroke="#444" stroke-width="1"/><rect x="10.2" y="9.3" width="1.7" height="6" fill="#444"/><rect x="10.2" y="6" width="1.7" height="1.8" fill="#444"/><rect x="24.5" y="0.5" width="21" height="21" rx="5" fill="#f7f7f7" stroke="#8a8a8a"/><path d="M29.5 5.5l11 11M40.5 5.5l-11 11" stroke="#444" stroke-width="1" fill="none"/></svg>
<div class="a" style="left:1472px;top:720.0px;width:49px;height:22px;border:1px solid #7a7a7a;background:#f5f5f5"><div class="a" style="left:0;top:0;width:43.5px;height:20px;overflow:hidden"><div class="t" style="left:4.5px;top:4px;font-size:12px;color:#222">Point 2</div></div></div>
<div class="a" style="left:1523px;top:720.0px;width:73px;height:22px;border:1px solid #7a7a7a;background:#f5f5f5"><div class="a" style="left:0;top:0;width:68px;height:20px;overflow:hidden"><div class="t" style="left:4.5px;top:4px;font-size:12px;color:#222">6350,2217 (1)</div></div></div>
<div class="a" style="left:1599px;top:720.0px;width:22px;height:22px;background:#dd5400"></div>
<svg style="left:1622px;top:720.0px" width="46" height="22" viewBox="0 0 46 22"><rect x="0.5" y="0.5" width="21" height="21" rx="5" fill="#f7f7f7" stroke="#8a8a8a"/><circle cx="11" cy="11" r="7.3" fill="none" stroke="#444" stroke-width="1"/><rect x="10.2" y="9.3" width="1.7" height="6" fill="#444"/><rect x="10.2" y="6" width="1.7" height="1.8" fill="#444"/><rect x="24.5" y="0.5" width="21" height="21" rx="5" fill="#f7f7f7" stroke="#8a8a8a"/><path d="M29.5 5.5l11 11M40.5 5.5l-11 11" stroke="#444" stroke-width="1" fill="none"/></svg>
<div class="a" style="left:1472px;top:746.0px;width:49px;height:22px;border:1px solid #7a7a7a;background:#f5f5f5"><div class="a" style="left:0;top:0;width:43.5px;height:20px;overflow:hidden"><div class="t" style="left:4.5px;top:4px;font-size:12px;color:#222">Point 3</div></div></div>
<div class="a" style="left:1523px;top:746.0px;width:73px;height:22px;border:1px solid #7a7a7a;background:#f5f5f5"><div class="a" style="left:0;top:0;width:68px;height:20px;overflow:hidden"><div class="t" style="left:4.5px;top:4px;font-size:12px;color:#222">5576,2516 (1)</div></div></div>
<div class="a" style="left:1599px;top:746.0px;width:22px;height:22px;background:#edb120"></div>
<svg style="left:1622px;top:746.0px" width="46" height="22" viewBox="0 0 46 22"><rect x="0.5" y="0.5" width="21" height="21" rx="5" fill="#f7f7f7" stroke="#8a8a8a"/><circle cx="11" cy="11" r="7.3" fill="none" stroke="#444" stroke-width="1"/><rect x="10.2" y="9.3" width="1.7" height="6" fill="#444"/><rect x="10.2" y="6" width="1.7" height="1.8" fill="#444"/><rect x="24.5" y="0.5" width="21" height="21" rx="5" fill="#f7f7f7" stroke="#8a8a8a"/><path d="M29.5 5.5l11 11M40.5 5.5l-11 11" stroke="#444" stroke-width="1" fill="none"/></svg>
<div class="a" style="left:1472px;top:772.0px;width:49px;height:22px;border:1px solid #7a7a7a;background:#f5f5f5"><div class="a" style="left:0;top:0;width:43.5px;height:20px;overflow:hidden"><div class="t" style="left:4.5px;top:4px;font-size:12px;color:#222">Point 4</div></div></div>
<div class="a" style="left:1523px;top:772.0px;width:73px;height:22px;border:1px solid #7a7a7a;background:#f5f5f5"><div class="a" style="left:0;top:0;width:68px;height:20px;overflow:hidden"><div class="t" style="left:4.5px;top:4px;font-size:12px;color:#222">827,6297 (1)</div></div></div>
<div class="a" style="left:1599px;top:772.0px;width:22px;height:22px;background:#8516d1"></div>
<svg style="left:1622px;top:772.0px" width="46" height="22" viewBox="0 0 46 22"><rect x="0.5" y="0.5" width="21" height="21" rx="5" fill="#f7f7f7" stroke="#8a8a8a"/><circle cx="11" cy="11" r="7.3" fill="none" stroke="#444" stroke-width="1"/><rect x="10.2" y="9.3" width="1.7" height="6" fill="#444"/><rect x="10.2" y="6" width="1.7" height="1.8" fill="#444"/><rect x="24.5" y="0.5" width="21" height="21" rx="5" fill="#f7f7f7" stroke="#8a8a8a"/><path d="M29.5 5.5l11 11M40.5 5.5l-11 11" stroke="#444" stroke-width="1" fill="none"/></svg>
<div class="a" style="left:1472px;top:798.0px;width:49px;height:22px;border:1px solid #7a7a7a;background:#f5f5f5"><div class="a" style="left:0;top:0;width:43.5px;height:20px;overflow:hidden"><div class="t" style="left:4.5px;top:4px;font-size:12px;color:#222">EM Point 1</div></div></div>
<div class="a" style="left:1523px;top:798.0px;width:73px;height:22px;border:1px solid #7a7a7a;background:#f5f5f5"><div class="a" style="left:0;top:0;width:68px;height:20px;overflow:hidden"><div class="t" style="left:4.5px;top:4px;font-size:12px;color:#222">6740,5323 (1)</div></div></div>
<div class="a" style="left:1599px;top:798.0px;width:22px;height:22px;background:#05b714"></div>
<svg style="left:1622px;top:798.0px" width="46" height="22" viewBox="0 0 46 22"><rect x="0.5" y="0.5" width="21" height="21" rx="5" fill="#f7f7f7" stroke="#8a8a8a"/><circle cx="11" cy="11" r="7.3" fill="none" stroke="#444" stroke-width="1"/><rect x="10.2" y="9.3" width="1.7" height="6" fill="#444"/><rect x="10.2" y="6" width="1.7" height="1.8" fill="#444"/><rect x="24.5" y="0.5" width="21" height="21" rx="5" fill="#f7f7f7" stroke="#8a8a8a"/><path d="M29.5 5.5l11 11M40.5 5.5l-11 11" stroke="#444" stroke-width="1" fill="none"/></svg>
<div class="a" style="left:1472px;top:824.0px;width:49px;height:22px;border:1px solid #7a7a7a;background:#f5f5f5"><div class="a" style="left:0;top:0;width:43.5px;height:20px;overflow:hidden"><div class="t" style="left:4.5px;top:4px;font-size:12px;color:#222">EM Point 2</div></div></div>
<div class="a" style="left:1523px;top:824.0px;width:73px;height:22px;border:1px solid #7a7a7a;background:#f5f5f5"><div class="a" style="left:0;top:0;width:68px;height:20px;overflow:hidden"><div class="t" style="left:4.5px;top:4px;font-size:12px;color:#222">6686,4888 (1)</div></div></div>
<div class="a" style="left:1599px;top:824.0px;width:22px;height:22px;background:#0b5c36"></div>
<svg style="left:1622px;top:824.0px" width="46" height="22" viewBox="0 0 46 22"><rect x="0.5" y="0.5" width="21" height="21" rx="5" fill="#f7f7f7" stroke="#8a8a8a"/><circle cx="11" cy="11" r="7.3" fill="none" stroke="#444" stroke-width="1"/><rect x="10.2" y="9.3" width="1.7" height="6" fill="#444"/><rect x="10.2" y="6" width="1.7" height="1.8" fill="#444"/><rect x="24.5" y="0.5" width="21" height="21" rx="5" fill="#f7f7f7" stroke="#8a8a8a"/><path d="M29.5 5.5l11 11M40.5 5.5l-11 11" stroke="#444" stroke-width="1" fill="none"/></svg>
<div class="a" style="left:1472px;top:850.0px;width:49px;height:22px;border:1px solid #7a7a7a;background:#f5f5f5"><div class="a" style="left:0;top:0;width:43.5px;height:20px;overflow:hidden"><div class="t" style="left:4.5px;top:4px;font-size:12px;color:#222">EM Point 3</div></div></div>
<div class="a" style="left:1523px;top:850.0px;width:73px;height:22px;border:1px solid #7a7a7a;background:#f5f5f5"><div class="a" style="left:0;top:0;width:68px;height:20px;overflow:hidden"><div class="t" style="left:4.5px;top:4px;font-size:12px;color:#222">4858,1235 (1)</div></div></div>
<div class="a" style="left:1599px;top:850.0px;width:22px;height:22px;background:#0b2f2c"></div>
<svg style="left:1622px;top:850.0px" width="46" height="22" viewBox="0 0 46 22"><rect x="0.5" y="0.5" width="21" height="21" rx="5" fill="#f7f7f7" stroke="#8a8a8a"/><circle cx="11" cy="11" r="7.3" fill="none" stroke="#444" stroke-width="1"/><rect x="10.2" y="9.3" width="1.7" height="6" fill="#444"/><rect x="10.2" y="6" width="1.7" height="1.8" fill="#444"/><rect x="24.5" y="0.5" width="21" height="21" rx="5" fill="#f7f7f7" stroke="#8a8a8a"/><path d="M29.5 5.5l11 11M40.5 5.5l-11 11" stroke="#444" stroke-width="1" fill="none"/></svg>
<div class="a" style="left:1693px;top:144px;width:227px;height:22px;background:#fff"></div>
<div class="a" style="left:1693px;top:166px;width:227px;height:1px;background:#c0c0c0"></div>
<div class="a" style="left:1693px;top:167px;width:227px;height:22px;background:#fff"></div>
<div class="a" style="left:1693px;top:189px;width:227px;height:1px;background:#c0c0c0"></div>
<svg style="left:1703px;top:151px" width="5" height="9"><path d="M0 0v9l5-4.5z" fill="#9a9a9a"/></svg>
<svg style="left:1701px;top:176px" width="9" height="5"><path d="M0 0h9l-4.5 5z" fill="#9a9a9a"/></svg>
<div class="t ph" style="left:1717px;top:149px">Metadata</div>
<div class="t ph" style="left:1717px;top:172px">Raster Reference</div>
<svg style="left:1900px;top:150px" width="3" height="11"><rect x="0.5" y="0" width="2" height="2" fill="#555"/><rect x="0.5" y="4.5" width="2" height="2" fill="#555"/><rect x="0.5" y="9" width="2" height="2" fill="#555"/></svg>
<svg style="left:1900px;top:173px" width="3" height="11"><rect x="0.5" y="0" width="2" height="2" fill="#555"/><rect x="0.5" y="4.5" width="2" height="2" fill="#555"/><rect x="0.5" y="9" width="2" height="2" fill="#555"/></svg>
<div class="a" style="left:1712px;top:201px;width:187px;height:40px;background:#f5f5f5;border:1px solid #8a8a8a;overflow:hidden"><div class="t" style="left:1px;top:4px;font-size:12px;color:#222">To know more about MapPostingsReference</div></div>
<div class="a" style="left:1713px;top:225px;width:185px;height:15px;background:#f0f0f0"></div>
<div class="a" style="left:1730px;top:225px;width:92px;height:13px;background:#c1c1c1"></div>
<svg style="left:1718px;top:228px" width="4" height="8"><path d="M4 0v8l-4-4z" fill="#a3a3a3"/></svg>
<svg style="left:1888px;top:228px" width="4" height="8"><path d="M0 0v8l4-4z" fill="#505050"/></svg>
<div class="a" style="left:1712px;top:251px;width:187px;height:858px;background:#fff;border:1px solid #8a8a8a"></div>
<div class="a" style="left:1713px;top:252px;width:185px;height:27px;background:#f5f5f5"></div>
<div class="t" style="left:1716px;top:260px;font-size:12px;font-weight:bold;color:#222">Attributes</div>
<div class="t" style="left:1810px;top:260px;font-size:12px;font-weight:bold;color:#222">Values</div>
<div class="a" style="left:1713px;top:278.4px;width:185px;height:24.53px;background:#fff;border-top:1px solid #8a8a8a"></div>
<div class="t" style="left:1716px;top:283.2px;font-size:12px;color:#3c3c3c">XWorldLimits</div>
<div class="t" style="left:1810px;top:283.2px;font-size:12px;color:#3c3c3c">[204900 4344...</div>
<div class="a" style="left:1713px;top:302.9px;width:185px;height:24.53px;background:#f5f5f5;border-top:1px solid #8a8a8a"></div>
<div class="t" style="left:1716px;top:307.7px;font-size:12px;color:#3c3c3c">YWorldLimits</div>
<div class="t" style="left:1810px;top:307.7px;font-size:12px;color:#3c3c3c">[-3629400 -3...</div>
<div class="a" style="left:1713px;top:327.5px;width:185px;height:24.53px;background:#fff;border-top:1px solid #8a8a8a"></div>
<div class="t" style="left:1716px;top:332.3px;font-size:12px;color:#3c3c3c">RasterSize</div>
<div class="t" style="left:1810px;top:332.3px;font-size:12px;color:#3c3c3c">[7721 7651]</div>
<div class="a" style="left:1713px;top:352.0px;width:185px;height:24.53px;background:#f5f5f5;border-top:1px solid #8a8a8a"></div>
<div class="t" style="left:1716px;top:356.8px;font-size:12px;color:#3c3c3c">RasterInterpr...</div>
<div class="t" style="left:1810px;top:356.8px;font-size:12px;color:#3c3c3c">postings</div>
<div class="a" style="left:1713px;top:376.5px;width:185px;height:24.53px;background:#fff;border-top:1px solid #8a8a8a"></div>
<div class="t" style="left:1716px;top:381.3px;font-size:12px;color:#3c3c3c">ColumnsStart...</div>
<div class="t" style="left:1810px;top:381.3px;font-size:12px;color:#3c3c3c">north</div>
<div class="a" style="left:1713px;top:401.0px;width:185px;height:24.53px;background:#f5f5f5;border-top:1px solid #8a8a8a"></div>
<div class="t" style="left:1716px;top:405.8px;font-size:12px;color:#3c3c3c">RowsStartFrom</div>
<div class="t" style="left:1810px;top:405.8px;font-size:12px;color:#3c3c3c">west</div>
<div class="a" style="left:1713px;top:425.6px;width:185px;height:24.53px;background:#fff;border-top:1px solid #8a8a8a"></div>
<div class="t" style="left:1716px;top:430.4px;font-size:12px;color:#3c3c3c">SampleSpaci...</div>
<div class="t" style="left:1810px;top:430.4px;font-size:12px;color:#3c3c3c">30</div>
<div class="a" style="left:1713px;top:450.1px;width:185px;height:24.53px;background:#f5f5f5;border-top:1px solid #8a8a8a"></div>
<div class="t" style="left:1716px;top:454.9px;font-size:12px;color:#3c3c3c">SampleSpaci...</div>
<div class="t" style="left:1810px;top:454.9px;font-size:12px;color:#3c3c3c">30</div>
<div class="a" style="left:1713px;top:474.6px;width:185px;height:24.53px;background:#fff;border-top:1px solid #8a8a8a"></div>
<div class="t" style="left:1716px;top:479.4px;font-size:12px;color:#3c3c3c">RasterExtentI...</div>
<div class="t" style="left:1810px;top:479.4px;font-size:12px;color:#3c3c3c">229500</div>
<div class="a" style="left:1713px;top:499.2px;width:185px;height:24.53px;background:#f5f5f5;border-top:1px solid #8a8a8a"></div>
<div class="t" style="left:1716px;top:504.0px;font-size:12px;color:#3c3c3c">RasterExtentI...</div>
<div class="t" style="left:1810px;top:504.0px;font-size:12px;color:#3c3c3c">231600</div>
<div class="a" style="left:1713px;top:523.7px;width:185px;height:24.53px;background:#fff;border-top:1px solid #8a8a8a"></div>
<div class="t" style="left:1716px;top:528.5px;font-size:12px;color:#3c3c3c">XIntrinsicLimits</div>
<div class="t" style="left:1810px;top:528.5px;font-size:12px;color:#3c3c3c">[1 7651]</div>
<div class="a" style="left:1713px;top:548.2px;width:185px;height:24.53px;background:#f5f5f5;border-top:1px solid #8a8a8a"></div>
<div class="t" style="left:1716px;top:553.0px;font-size:12px;color:#3c3c3c">YIntrinsicLimits</div>
<div class="t" style="left:1810px;top:553.0px;font-size:12px;color:#3c3c3c">[1 7721]</div>
<div class="a" style="left:1713px;top:572.8px;width:185px;height:24.53px;background:#fff;border-top:1px solid #8a8a8a"></div>
<div class="t" style="left:1716px;top:577.6px;font-size:12px;color:#3c3c3c">Transformatio...</div>
<div class="t" style="left:1810px;top:577.6px;font-size:12px;color:#3c3c3c">rectilinear</div>
<div class="a" style="left:1713px;top:597.3px;width:185px;height:24.53px;background:#f5f5f5;border-top:1px solid #8a8a8a"></div>
<div class="t" style="left:1716px;top:602.1px;font-size:12px;color:#3c3c3c">CoordinateSy...</div>
<div class="t" style="left:1810px;top:602.1px;font-size:12px;color:#3c3c3c">planar</div>
<div class="a" style="left:1713px;top:621.8px;width:185px;height:24.53px;background:#fff;border-top:1px solid #8a8a8a"></div>
<div class="t" style="left:1716px;top:626.6px;font-size:12px;color:#3c3c3c">ProjectedCR...</div>
<div class="t" style="left:1810px;top:626.6px;font-size:12px;color:#3c3c3c">WGS 84 / UT...</div>
<div class="a" style="left:1713px;top:646.4px;width:185px;height:24.53px;background:#f5f5f5;border-top:1px solid #8a8a8a"></div>
<div class="t" style="left:1716px;top:651.1px;font-size:12px;color:#3c3c3c">GeographicC...</div>
<div class="t" style="left:1810px;top:651.1px;font-size:12px;color:#3c3c3c">WGS 84</div>
<div class="a" style="left:1713px;top:670.9px;width:185px;height:1px;background:#8a8a8a"></div>
<div class="a" style="left:1806px;top:252px;width:1px;height:418.9px;background:#8a8a8a"></div>
<div class="a" style="left:1713px;top:1092px;width:185px;height:15px;background:#f0f0f0"></div>
<div class="a" style="left:1730px;top:1093px;width:150px;height:13px;background:#c1c1c1"></div>
<svg style="left:1718px;top:1095px" width="4" height="8"><path d="M4 0v8l-4-4z" fill="#a3a3a3"/></svg>
<svg style="left:1888px;top:1095px" width="4" height="8"><path d="M0 0v8l4-4z" fill="#505050"/></svg>
<div class="a" style="left:0;top:1128px;width:1920px;height:24px;background:#e6e6e6;border-top:1px solid #c4c4c4"></div>
<div class="a" style="left:768px;top:1129px;width:1px;height:23px;background:#c4c4c4"></div>
<div class="a" style="left:1692px;top:1129px;width:1px;height:23px;background:#c4c4c4"></div>
<div class="t" style="left:776px;top:1135px;font-size:12px;color:#222">Image Size: 7651,7721</div>
<div class="t" style="left:909px;top:1135px;font-size:12px;color:#222">Num Bands: 11</div>
<div class="t" style="left:1016px;top:1135px;font-size:12px;color:#222">Spectral Range: 440.00nm- 2200.00nm</div>
<svg style="left:7px;top:1135px" width="9" height="12"><rect x="0" y="0" width="1.6" height="12" fill="#999"/><path d="M9 0V12L2 6Z" fill="#999"/></svg>
<svg style="left:1904px;top:1135px" width="9" height="12"><rect x="7.4" y="0" width="1.6" height="12" fill="#999"/><path d="M0 0V12L7 6Z" fill="#999"/></svg>
<svg style="left:1675px;top:1136px" width="12" height="10"><path d="M0.5 0.5H11.5L6 6.5Z" fill="#aaa" stroke="#888" stroke-width="0.8"/><path d="M0 9h12" stroke="#888" stroke-width="1.4"/></svg>
</div></body></html>
